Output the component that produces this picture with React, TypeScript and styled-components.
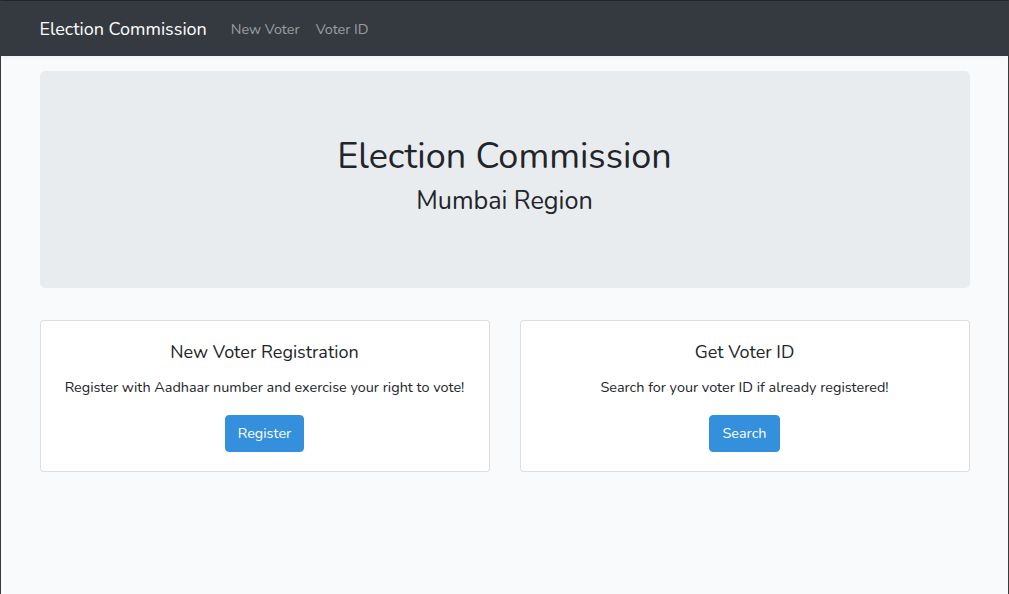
import React from "react";
import styled, { createGlobalStyle } from "styled-components";

const Global = createGlobalStyle`
  html, body { margin: 0; padding: 0; }
  body {
    background: #f8fafc;
    font-family: "Nunito", "Lato", "Noto Sans", sans-serif;
    font-size: 14.4px;
    line-height: 1.6;
    color: #212529;
  }
  * { box-sizing: border-box; }
`;

const Frame = styled.div`
  min-height: 594px;
  border-left: 1px solid #3a3a3a;
  border-right: 1px solid #3a3a3a;
  border-top: 1px solid #23272b;
  background: #f8fafc;
`;

const Navbar = styled.nav`
  background: #343a40;
  height: 55px;
  padding-top: 2px;
  display: flex;
  align-items: center;
  box-shadow: 0 2px 4px rgba(0, 0, 0, 0.04);
`;

const Container = styled.div`
  width: 960px;
  margin: 0 auto;
  padding: 0 15px;
`;

const NavInner = styled(Container)`
  display: flex;
  align-items: center;
`;

const Brand = styled.a`
  color: #fff;
  font-size: 18px;
  line-height: 28.8px;
  margin-right: 16px;
  text-decoration: none;
`;

const NavLink = styled.a`
  color: rgba(255, 255, 255, 0.5);
  padding: 8px;
  text-decoration: none;
`;

const Main = styled.main`
  padding-top: 15px;
`;

const Jumbotron = styled.div`
  background: #e9ecef;
  border-radius: 5px;
  padding: 64px 32px;
  margin-bottom: 32px;
  text-align: center;
`;

const Title = styled.h1`
  margin: 0 0 8px;
  font-size: 36px;
  font-weight: 400;
  line-height: 1.2;
`;

const Subtitle = styled.h3`
  margin: 0 0 8px;
  font-size: 25.2px;
  font-weight: 400;
  line-height: 1.2;
`;

const Row = styled.div`
  display: grid;
  grid-template-columns: 1fr 1fr;
  gap: 30px;
`;

const Card = styled.div`
  background: #fff;
  border: 1px solid rgba(0, 0, 0, 0.125);
  border-radius: 4px;
  padding: 21px 20px 19px;
  text-align: center;
`;

const CardTitle = styled.h5`
  margin: 0 0 12px;
  font-size: 18px;
  font-weight: 400;
  line-height: 1.2;
`;

const CardText = styled.p`
  margin: 0 0 16px;
`;

const Button = styled.a`
  display: inline-block;
  background: #3490dc;
  color: #fff;
  border: 1px solid #3490dc;
  border-radius: 4px;
  padding: 6px 12px;
  text-decoration: none;
  line-height: 1.6;
`;

export default function App() {
  return (
    <>
      <Global />
      <Frame>
        <Navbar>
          <NavInner>
            <Brand href="#">Election Commission</Brand>
            <NavLink href="#">New Voter</NavLink>
            <NavLink href="#">Voter ID</NavLink>
          </NavInner>
        </Navbar>
        <Main>
          <Container>
            <Jumbotron>
              <Title>Election Commission</Title>
              <Subtitle>Mumbai Region</Subtitle>
            </Jumbotron>
            <Row>
              <Card>
                <CardTitle>New Voter Registration</CardTitle>
                <CardText>Register with Aadhaar number and exercise your right to vote!</CardText>
                <Button href="#">Register</Button>
              </Card>
              <Card>
                <CardTitle>Get Voter ID</CardTitle>
                <CardText>Search for your voter ID if already registered!</CardText>
                <Button href="#">Search</Button>
              </Card>
            </Row>
          </Container>
        </Main>
      </Frame>
    </>
  );
}
